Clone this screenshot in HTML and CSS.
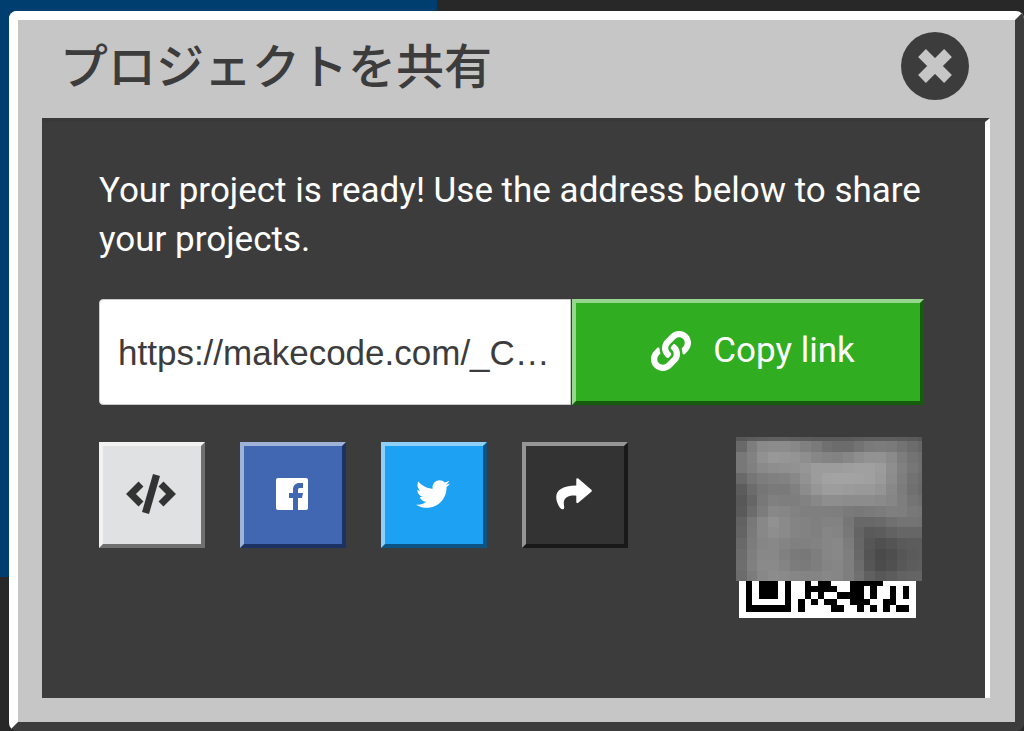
FILE: index.html
```html
<!DOCTYPE html>
<html lang="ja">
<head>
  <meta charset="UTF-8" />
  <meta name="viewport" content="width=device-width, initial-scale=1.0"/>
  <title>プロジェクトを共有</title>
  <link rel="stylesheet" href="styles.css">
</head>
<body>
  <div class="modal" role="dialog" aria-labelledby="share-title">
    <header class="modal-header">
      <h1 id="share-title">プロジェクトを共有</h1>
      <button type="button" class="close" aria-label="Close">
        <svg viewBox="0 0 68 68">
          <circle cx="34" cy="34" r="34" fill="#3c3c3c"/>
          <path d="M21 21L47 47M47 21L21 47" stroke="#c6c6c6" stroke-width="11"/>
        </svg>
      </button>
    </header>

    <main class="modal-body">
      <p>Your project is ready! Use the address below to share your projects.</p>

      <div class="link-row">
        <input type="text" class="link-input" aria-label="Project address" value="https://makecode.com/_C…" readonly />
        <button type="button" class="btn copy">
          <svg viewBox="0 0 512 512" fill="#fff"><path d="M326.612 185.391c59.747 59.809 58.927 155.698.36 214.59-.11.12-.24.25-.36.37l-67.2 67.2c-59.27 59.27-155.699 59.262-214.96 0-59.27-59.26-59.27-155.7 0-214.96l37.106-37.106c9.84-9.84 26.786-3.3 27.294 10.606.648 17.722 3.826 35.527 9.69 52.721 1.986 5.822.567 12.262-3.783 16.612l-13.087 13.087c-28.026 28.026-28.905 73.66-1.155 101.96 28.024 28.579 74.086 28.749 102.325.51l67.2-67.19c28.191-28.191 28.073-73.757 0-101.83-3.701-3.694-7.429-6.564-10.341-8.569a16.037 16.037 0 0 1-6.947-12.606c-.396-10.567 3.348-21.456 11.698-29.806l21.054-21.055c5.521-5.521 14.182-6.199 20.584-1.731a152.482 152.482 0 0 1 20.522 17.197zM467.547 44.449c-59.261-59.262-155.69-59.27-214.96 0l-67.2 67.2c-.12.12-.25.25-.36.37-58.566 58.892-59.387 154.781.36 214.59a152.454 152.454 0 0 0 20.521 17.196c6.402 4.468 15.064 3.789 20.584-1.731l21.054-21.055c8.35-8.35 12.094-19.239 11.698-29.806a16.037 16.037 0 0 0-6.947-12.606c-2.912-2.005-6.64-4.875-10.341-8.569-28.073-28.073-28.191-73.639 0-101.83l67.2-67.19c28.239-28.239 74.3-28.069 102.325.51 27.75 28.3 26.872 73.934-1.155 101.96l-13.087 13.087c-4.35 4.35-5.769 10.79-3.783 16.612 5.864 17.194 9.042 34.999 9.69 52.721.509 13.906 17.454 20.446 27.294 10.606l37.106-37.106c59.271-59.259 59.271-155.699.001-214.959z"/></svg>
          <span>Copy link</span>
        </button>
      </div>

      <div class="share-row">
        <div class="share-buttons">
          <button type="button" class="btn square embed" aria-label="Embed">
            <svg viewBox="0 0 50 40" width="50" height="40">
              <path d="M15 10L5 20L15 30M35 10L45 20L35 30" fill="none" stroke="#333" stroke-width="7"/>
              <path d="M27 0L34 2L23 40L16 38Z" fill="#333"/>
            </svg>
          </button>
          <button type="button" class="btn square facebook" aria-label="Facebook">
            <svg viewBox="0 0 32 32" width="32" height="32">
              <rect width="32" height="32" rx="2" fill="#fff"/>
              <path d="M17 32V20H13V15H17V12C17 7 20 5 23 5H27V10H24C22 10 22 11 22 12V15H27L26 20H22V32Z" fill="#4267b2"/>
            </svg>
          </button>
          <button type="button" class="btn square twitter" aria-label="Twitter">
            <svg viewBox="0 0 512 512" width="34" height="34" fill="#fff"><path d="M459.37 151.716c.325 4.548.325 9.097.325 13.645 0 138.72-105.583 298.558-298.558 298.558-59.452 0-114.68-17.219-161.137-47.106 8.447.974 16.568 1.299 25.34 1.299 49.055 0 94.213-16.568 130.274-44.832-46.132-.975-84.792-31.188-98.112-72.772 6.498.974 12.995 1.624 19.818 1.624 9.421 0 18.843-1.3 27.614-3.573-48.081-9.747-84.143-51.98-84.143-102.985v-1.299c13.969 7.797 30.214 12.67 47.431 13.319-28.264-18.843-46.781-51.005-46.781-87.391 0-19.492 5.197-37.36 14.294-52.954 51.655 63.675 129.3 105.258 216.365 109.807-1.624-7.797-2.599-15.918-2.599-24.04 0-57.828 46.782-104.934 104.934-104.934 30.213 0 57.502 12.67 76.67 33.137 23.715-4.548 46.456-13.32 66.599-25.34-7.798 24.366-24.366 44.833-46.132 57.827 21.117-2.273 41.584-8.122 60.426-16.243-14.292 20.791-32.161 39.308-52.628 54.253z"/></svg>
          </button>
          <button type="button" class="btn square more" aria-label="Share">
            <svg viewBox="0 0 110 96" width="36" height="32" fill="#fff"><path d="M62 4Q62 -3 68 1L108 35Q111 38 108 41L68 75Q62 79 62 72V53C38 51 26 59 24 72C23 82 27 88 24 93C20 97 14 94 10 87C-10 52 0 23 62 22Z"/></svg>
          </button>
        </div>
        <svg class="qr" id="qr" viewBox="0 0 186 182" role="img" aria-label="QR code" shape-rendering="crispEdges"></svg>
      </div>
    </main>
  </div>

  <script src="script.js"></script>
</body>
</html>
```
FILE: styles.css
```css
* {
  box-sizing: border-box;
}
body {
  display: flex;
  min-height: 100vh;
  margin: 0;
  padding: 11px 0 0 9px;
  font-family: Roboto, "Noto Sans CJK JP", sans-serif;
  background: linear-gradient(#003e70, #003e70) no-repeat 0 0 / 437px 577px, #282828;
}
.modal {
  flex: 1;
  min-width: 0;
  display: flex;
  flex-direction: column;
  padding: 0 25px 24px 24px;
  background: #c6c6c6;
  border: 9px solid #fff;
  border-right-color: #3c3c3c;
  border-bottom-color: #3c3c3c;
  border-radius: 8px;
}
.modal-header {
  display: flex;
  justify-content: space-between;
  align-items: flex-start;
  height: 98px;
  padding: 12px 21px 0 18px;
}
h1 {
  margin: 0;
  color: #3c3c3c;
  font-family: "Noto Sans CJK JP", sans-serif;
  font-size: 48px;
  font-weight: 500;
  line-height: 62px;
}
.close {
  width: 68px;
  height: 68px;
  padding: 0;
  background: none;
  border: none;
  cursor: pointer;
}
.close svg {
  display: block;
}
.modal-body {
  flex: 1;
  padding: 44px 61px 40px 57px;
  background: #3c3c3c;
  border-top: 4px solid #393939;
  border-right: 5px solid #fff;
  color: #fff;
}
p {
  margin: 0 0 35px;
  font-size: 35px;
  line-height: 49px;
}
.link-row {
  display: flex;
  gap: 1px;
  margin-bottom: 37px;
}
.link-input {
  flex: 1;
  min-width: 0;
  height: 106px;
  padding: 2px 18px 0;
  background: #fff;
  border: 1px solid #ccc;
  border-radius: 4px 0 0 4px;
  color: #3c3c3c;
  font-family: "Liberation Sans", sans-serif;
  font-size: 35px;
  text-overflow: ellipsis;
}
.btn {
  display: flex;
  justify-content: center;
  align-items: center;
  padding: 0 2px 3px 0;
  border: 4px solid;
  color: #fff;
  font-family: Roboto, sans-serif;
  font-size: 35px;
  cursor: pointer;
}
.copy {
  width: 352px;
  gap: 22px;
  padding-left: 12px;
  background: #30ad21;
  border-color: #96d68f #155c0e #155c0e #96d68f;
}
.copy svg {
  width: 40px;
  height: 40px;
}
.share-row {
  display: flex;
  justify-content: space-between;
  align-items: flex-start;
  padding-right: 2px;
}
.share-buttons {
  display: flex;
  gap: 35px;
}
.square {
  width: 106px;
  height: 106px;
}
.embed {
  background: #e0e1e2;
  border-color: #f2f2f2 #707070 #707070 #f2f2f2;
}
.facebook {
  background: #4267b2;
  border-color: #9fb2d8 #1c3263 #1c3263 #9fb2d8;
}
.twitter {
  background: #1da1f2;
  border-color: #8ed0f8 #0c5484 #0c5484 #8ed0f8;
}
.more {
  background: #333;
  border-color: #969696 #191919 #191919 #969696;
}
.qr {
  width: 186px;
  height: 182px;
  margin-top: -5px;
}
```
FILE: script.js
```js
// QR modules, the first row is half hidden
const modules = [
  "1011101001011000111110000",
  "1011101001111100110100101",
  "1011101001010011110100101",
  "1000001010101100111001100",
  "1111111010000110010101011"
];

// grey levels of the blurred cover
const greys = [
  [88,92,94,96,96,94,92,90,90,90,90,92,94,94,94,92,90,86],
  [105,125,138,140,140,136,128,122,112,108,108,115,122,124,122,115,108,102],
  [120,130,145,152,150,148,142,135,132,130,135,142,146,146,138,125,115,110],
  [120,128,138,142,144,146,150,156,156,156,158,160,160,156,142,128,118,112],
  [105,118,125,128,130,136,146,156,162,163,163,162,160,154,140,126,114,108],
  [92,108,118,122,122,128,140,150,157,157,155,153,153,148,136,124,112,106],
  [88,102,120,128,126,126,130,136,142,142,140,140,140,138,134,126,116,112],
  [90,108,124,136,134,130,127,127,127,126,122,120,122,124,127,126,120,118],
  [98,120,136,145,138,132,130,128,130,130,118,104,104,106,112,116,116,114],
  [100,122,136,142,138,132,130,128,134,132,120,100,90,92,98,102,102,102],
  [105,124,134,136,132,128,128,130,134,136,124,102,86,80,84,90,92,92],
  [108,126,136,136,128,122,120,126,134,136,126,104,84,74,78,86,90,92],
  [110,128,138,138,132,124,122,126,132,134,126,108,86,76,80,88,92,94],
  [108,124,136,140,138,134,132,132,136,134,126,112,96,88,92,98,100,100]
];

function rect(x, y, w, h, fill) {
  return `<rect x="${x}" y="${y}" width="${w}" height="${h}" fill="${fill}"/>`;
}

const size = 177 / 27;
let html = rect(3, 140, 177, 41, "#fff");

modules.forEach((row, r) => {
  [...row].forEach((bit, c) => {
    if (bit === "1") {
      html += rect(3 + (c + 1) * size, 142 + r * size, size, size, "#000");
    }
  });
});

greys.forEach((row, r) => {
  const y = r === 0 ? 0 : 4 + (r - 1) * 10.8;
  const h = r === 0 ? 4 : 10.8;
  row.forEach((g, c) => {
    const x = c * 10.7;
    html += rect(x, y, Math.min(10.7, 186 - x), h, `rgb(${g},${g},${g})`);
  });
});

document.getElementById("qr").innerHTML = html;
```
